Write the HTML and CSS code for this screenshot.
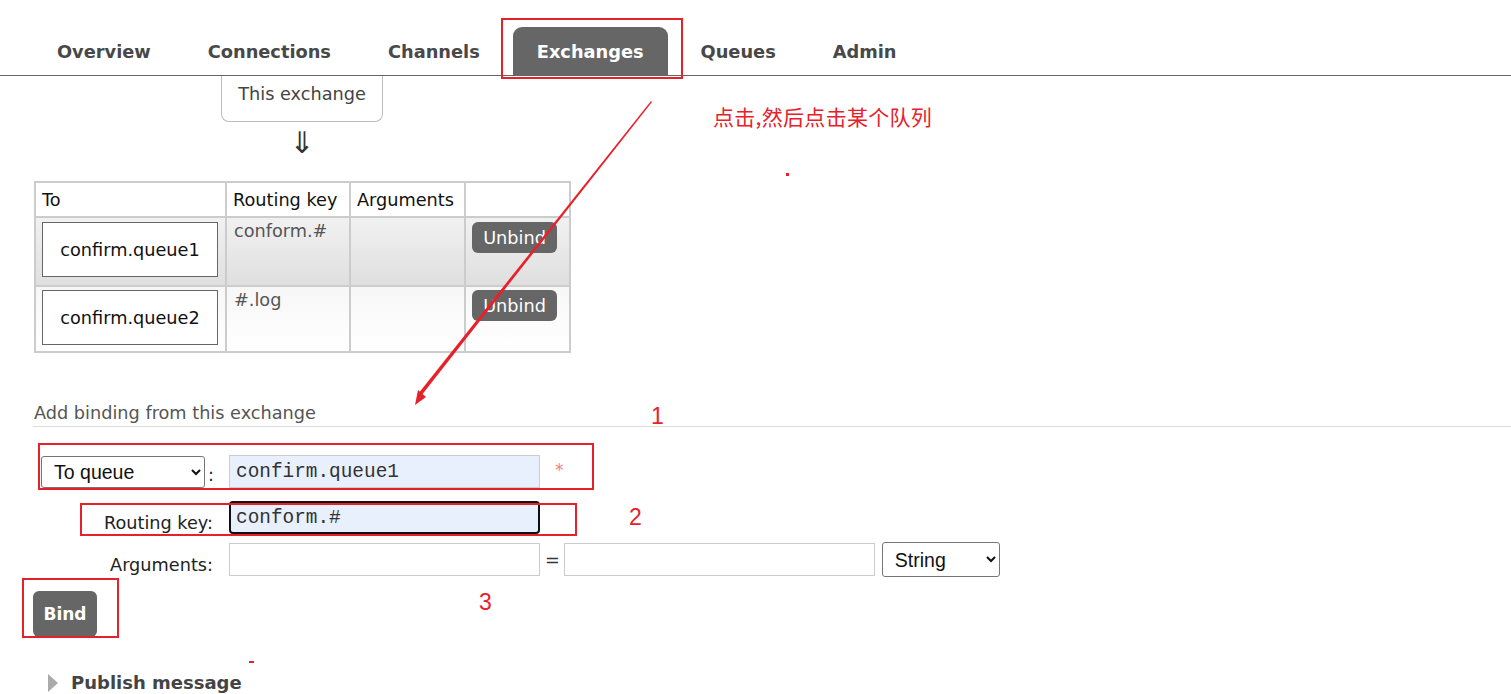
FILE: index.html
```html
<!DOCTYPE html>
<html lang="en">
<head>
<meta charset="utf-8">
<title>Exchange</title>
<link rel="stylesheet" href="styles.css">
</head>
<body>
<div class="page">
  <nav class="tabs">
    <a class="tab">Overview</a>
    <a class="tab">Connections</a>
    <a class="tab">Channels</a>
    <a class="tab active">Exchanges</a>
    <a class="tab">Queues</a>
    <a class="tab">Admin</a>
  </nav>

  <main class="content">
    <div class="diagram">
      <div class="source-box">This exchange</div>
      <div class="down-arrow">&#x21D3;</div>
    </div>

    <div class="bindings">
      <div class="cell head">To</div>
      <div class="cell head">Routing key</div>
      <div class="cell head">Arguments</div>
      <div class="cell head"></div>

      <div class="cell r1"><div class="queue-box">confirm.queue1</div></div>
      <div class="cell r1 key">conform.#</div>
      <div class="cell r1"></div>
      <div class="cell r1"><button class="btn-unbind">Unbind</button></div>

      <div class="cell r2"><div class="queue-box">confirm.queue2</div></div>
      <div class="cell r2 key">#.log</div>
      <div class="cell r2"></div>
      <div class="cell r2"><button class="btn-unbind">Unbind</button></div>
    </div>

    <h2 class="section-title">Add binding from this exchange</h2>

    <div class="bind-form">
      <div class="label label-select">
        <select class="sel sel-dest"><option>To queue</option><option>To exchange</option></select><span class="colon">:</span>
      </div>
      <div class="field">
        <input class="txt filled" type="text" value="confirm.queue1"><span class="req">*</span>
      </div>

      <div class="label label-text">Routing key:</div>
      <div class="field">
        <input class="txt filled focused" type="text" value="conform.#">
      </div>

      <div class="label label-text">Arguments:</div>
      <div class="field">
        <input class="txt" type="text" value=""><span class="eq">=</span><input class="txt" type="text" value=""><select class="sel sel-type"><option>String</option><option>Number</option><option>Boolean</option></select>
      </div>
    </div>

    <button class="btn-bind">Bind</button>

    <div class="publish"><span class="tri"></span>Publish message</div>
  </main>

  <div class="annotations">
    <div class="mark mark-tab"></div>
    <div class="note note-cn">点击,然后点击某个队列</div>
    <div class="dot dot-a"></div>
    <svg class="arrow" width="1511" height="694" viewBox="0 0 1511 694">
      <polygon points="651,101 652,102 421,396 418,394" fill="#e8202a"/>
      <polygon points="415,405 418,390 426,397" fill="#e8202a"/>
    </svg>
    <div class="num num-1">1</div>
    <div class="mark mark-r1"></div>
    <div class="num num-2">2</div>
    <div class="mark mark-r2"></div>
    <div class="num num-3">3</div>
    <div class="mark mark-bind"></div>
    <div class="dash"></div>
  </div>
</div>
</body>
</html>
```

FILE: styles.css
```css
* { box-sizing: border-box; }

html, body {
  margin: 0;
  padding: 0;
  background: #fff;
}

body {
  font-family: "DejaVu Sans", Verdana, sans-serif;
  font-size: 17.7px;
  color: #333;
}

.page {
  position: relative;
  width: 1511px;
  height: 694px;
  overflow: hidden;
}

/* ---------- tabs ---------- */
.tabs {
  display: flex;
  gap: 9px;
  padding: 27px 0 0 33px;
  border-bottom: 1px solid #666;
}

.tab {
  display: flex;
  align-items: center;
  height: 48px;
  padding: 0 24px;
  font-weight: bold;
  font-size: 17.8px;
  color: #484848;
}

.tab.active {
  background: #666;
  color: #fff;
  border-radius: 9px 9px 0 0;
}

/* ---------- content ---------- */
.content {
  padding-left: 33px;
}

.diagram {
  display: flex;
  flex-direction: column;
  width: 162px;
  margin-left: 188px;
}

.source-box {
  height: 46px;
  border: 1px solid #bbb;
  border-top: none;
  border-radius: 0 0 8px 8px;
  text-align: center;
  padding-top: 8px;
  color: #444;
}

.down-arrow {
  text-align: center;
  font-size: 30px;
  line-height: 38px;
  margin-top: 2px;
  color: #333;
}

/* ---------- bindings table ---------- */
.bindings {
  display: grid;
  grid-template-columns: 189px 122px 113px 103px;
  grid-template-rows: 33px 67px 64px;
  gap: 2px;
  padding: 2px;
  background: #ccc;
  width: 537px;
  margin: 19px 0 0 1px;
}

.cell {
  background: #fff;
}

.cell.head {
  display: flex;
  align-items: center;
  padding: 0 6px;
  color: #111;
}

.cell.r1 {
  background: linear-gradient(#f1f1f1, #dfdfdf);
  padding: 4px 6px;
}

.cell.r2 {
  background: linear-gradient(#f7f7f7, #fff);
  padding: 3px 6px;
}

.cell.key {
  color: #555;
  padding-left: 7px;
  padding-top: 3px;
}

.queue-box {
  display: flex;
  align-items: center;
  justify-content: center;
  width: 176px;
  height: 55px;
  background: #fff;
  border: 1px solid #666;
  color: #111;
}

.btn-unbind {
  font-family: "DejaVu Sans", Verdana, sans-serif;
  font-size: 17.7px;
  color: #fff;
  background: #666;
  border: none;
  border-radius: 6px;
  width: 85px;
  height: 31px;
  padding: 0;
}

/* ---------- add binding ---------- */
.section-title {
  margin: 49px 0 0;
  padding-bottom: 2px;
  font-size: 17.7px;
  font-weight: normal;
  color: #555;
  border-bottom: 1px solid #ddd;
  line-height: 22px;
  padding-left: 1px;
}

.bind-form {
  display: grid;
  grid-template-columns: 196px auto;
  grid-template-rows: 33px 33px 33px;
  row-gap: 11px;
  margin-top: 28px;
  align-items: center;
}

.bind-form > .field:nth-child(4),
.bind-form > .label:nth-child(3) {
  margin-top: 4px;
}

.label {
  text-align: right;
  padding-right: 16px;
  color: #222;
}

.label-text {
  padding-top: 10px;
}

.label-select {
  display: flex;
  justify-content: flex-end;
  align-items: center;
  gap: 3px;
  padding-right: 15px;
}

.colon {
  color: #222;
  padding-top: 6px;
}

.field {
  display: flex;
  align-items: center;
}

.sel {
  font-family: "Liberation Sans", Arial, sans-serif;
  font-size: 19.5px;
  color: #111;
  background: #fff;
  border: 1px solid #767676;
  border-radius: 3px;
  padding: 0 6px 0 8px;
}

.sel-dest {
  width: 164px;
  height: 32px;
}

.sel-type {
  width: 118px;
  height: 35px;
  margin-left: 7px;
}

.txt {
  width: 311px;
  height: 33px;
  border: 1px solid #ccc;
  background: #fff;
  font-family: "Liberation Mono", "Courier New", monospace;
  font-size: 19.4px;
  color: #333;
  padding: 0 6px;
  outline: none;
}

.txt.filled {
  background: #e8f0fe;
}

.txt.focused {
  border: 2px solid #101010;
  border-radius: 4px;
  padding: 0 5px;
}

.req {
  color: #f08080;
  margin-left: 15px;
  font-size: 17px;
  padding-bottom: 4px;
}

.eq {
  color: #333;
  margin: 0 4px 0 5px;
  font-size: 17.7px;
}

.btn-bind {
  display: block;
  margin-top: 15px;
  width: 64px;
  height: 46px;
  border: none;
  border-radius: 6px;
  background: #666;
  color: #fff;
  font-family: "DejaVu Sans", Verdana, sans-serif;
  font-weight: bold;
  font-size: 17px;
  padding: 0;
}

.publish {
  display: flex;
  align-items: center;
  gap: 13px;
  margin: 35px 0 0 15px;
  font-weight: bold;
  font-size: 18px;
  color: #444;
}

.tri {
  width: 0;
  height: 0;
  border-top: 9px solid transparent;
  border-bottom: 9px solid transparent;
  border-left: 10px solid #aaa;
}

/* ---------- annotations (overlay) ---------- */
.annotations {
  position: absolute;
  inset: 0;
  pointer-events: none;
}

.mark {
  position: absolute;
  border: 2px solid #e8202a;
}

.mark-tab { left: 501px; top: 18px; width: 182px; height: 61px; }
.mark-r1 { left: 38px; top: 443px; width: 556px; height: 47px; }
.mark-r2 { left: 80px; top: 503px; width: 497px; height: 33px; }
.mark-bind { left: 22px; top: 578px; width: 97px; height: 60px; }

.note-cn {
  position: absolute;
  left: 713px;
  top: 102px;
  font-family: "Noto Sans CJK SC", sans-serif;
  font-size: 21px;
  line-height: 28px;
  color: #e8202a;
  letter-spacing: 0.3px;
}

.dot {
  position: absolute;
  background: #e8202a;
}

.dot-a { left: 786px; top: 173px; width: 3px; height: 3px; }

.dash {
  position: absolute;
  left: 249px;
  top: 661px;
  width: 5px;
  height: 2px;
  background: #e8202a;
}

.arrow {
  position: absolute;
  left: 0;
  top: 0;
}

.num {
  position: absolute;
  font-family: "Liberation Sans", Arial, sans-serif;
  font-size: 23px;
  line-height: 26px;
  color: #e8202a;
}

.num-1 { left: 651px; top: 403px; }
.num-2 { left: 629px; top: 504px; }
.num-3 { left: 479px; top: 589px; }
```
